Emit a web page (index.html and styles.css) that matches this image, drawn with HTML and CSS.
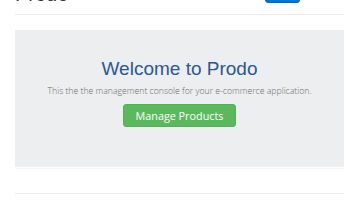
FILE: index.html
```html
<!DOCTYPE html>
<html lang="en">
<head>
    <meta charset="UTF-8">
    <meta name="viewport" content="width=device-width, initial-scale=1.0">
    <title>Prodo</title>
    <link rel="stylesheet" href="styles.css">
</head>
<body>
    <div class="container">
        <div class="topbar">
            <div class="brand">Prodo</div>
            <button class="btn-login">Login</button>
        </div>
        <hr class="rule">
        <div class="jumbotron">
            <h1>Welcome to Prodo</h1>
            <p>This the the management console for your e-commerce application.</p>
            <button class="btn-manage">Manage Products</button>
        </div>
        <div class="footer-edge"></div>
        <hr class="rule bottom">
    </div>
</body>
</html>
```

FILE: styles.css
```css
body {
    margin: 0;
    padding: 0;
    background-color: #fff;
    font-family: "Open Sans", Arial, sans-serif;
    overflow: hidden;
}

.container {
    padding: 0 16px 0 15px;
}

.topbar {
    display: flex;
    align-items: flex-end;
    justify-content: space-between;
    height: 26px;
    margin-top: -22px;
}

.brand {
    margin-bottom: -1px;
    font-family: "Liberation Sans", Arial, sans-serif;
    font-size: 20px;
    line-height: 22px;
    color: #333;
}

.btn-login {
    width: 35px;
    height: 26px;
    margin: 0 44px 1px 0;
    border: 1px solid #0267bf;
    border-radius: 3px;
    background-color: #0275d8;
    color: #fff;
    font-size: 10px;
}

.rule {
    margin: 10px 0 0;
    border: none;
    border-top: 1px solid #e9e9e9;
}

.jumbotron {
    margin-top: 15px;
    padding: 27px 10px 40px;
    background-color: #eceeef;
    text-align: center;
}

.jumbotron h1 {
    margin: 0 0 4px;
    font-family: "Liberation Sans", Arial, sans-serif;
    font-size: 19px;
    font-weight: normal;
    line-height: 23px;
    color: #2c5791;
}

.jumbotron p {
    margin: 0 0 5px;
    font-size: 8.7px;
    font-weight: 300;
    line-height: 14px;
    color: #6a6c6e;
}

.btn-manage {
    height: 23px;
    padding: 0 12px;
    border: 1px solid #54b054;
    border-radius: 3px;
    background-color: #5cb85c;
    color: #fff;
    font-family: "Open Sans", Arial, sans-serif;
    font-size: 10.8px;
    cursor: pointer;
}

.footer-edge {
    margin-top: 1px;
    border-top: 1px solid #f6f6f6;
}

.rule.bottom {
    margin-top: 24px;
}
```
